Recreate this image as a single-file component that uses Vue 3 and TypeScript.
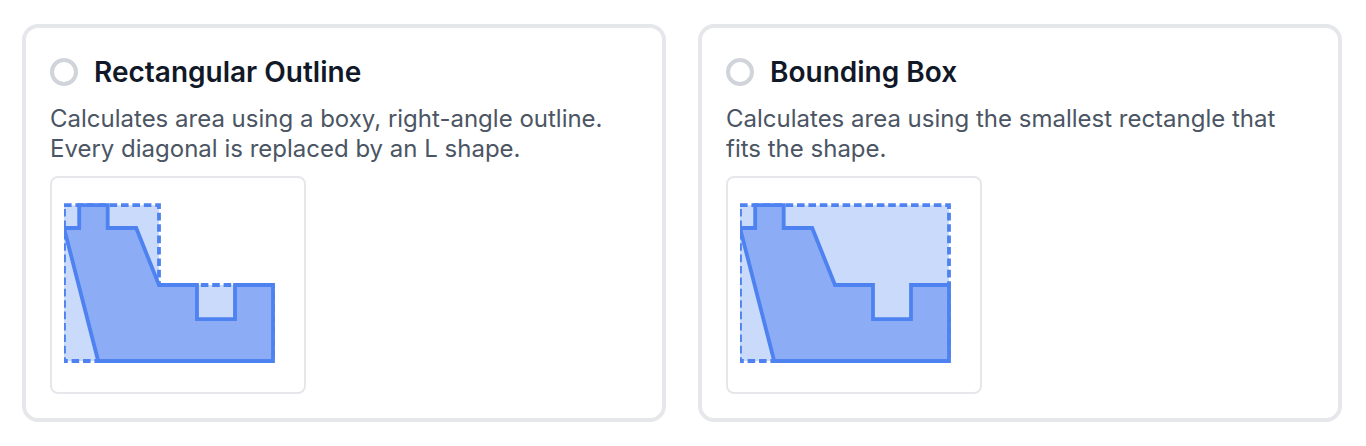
<script setup lang="ts">
import { ref } from 'vue'

interface Method {
  id: string
  title: string
  description: string
  envelope: string
}

const part =
  'M8 8H23V20H38L50 50H70V68H90V50H110V90H18L0 20H8Z'

const methods: Method[] = [
  {
    id: 'rectangular',
    title: 'Rectangular Outline',
    description:
      'Calculates area using a boxy, right-angle outline. Every diagonal is replaced by an L shape.',
    envelope: 'M0 8H50V50H110V90H0Z',
  },
  {
    id: 'bounding',
    title: 'Bounding Box',
    description:
      'Calculates area using the smallest rectangle that fits the shape.',
    envelope: 'M0 8H110V90H0Z',
  },
]

const selected = ref<string>('')
</script>

<template>
  <main class="methods" role="radiogroup" aria-label="Area calculation method">
    <label v-for="m in methods" :key="m.id" class="card" :for="m.id">
      <span class="heading">
        <input
          :id="m.id"
          v-model="selected"
          class="radio"
          type="radio"
          name="area-method"
          :value="m.id"
        />
        <span class="title">{{ m.title }}</span>
      </span>
      <span class="description">{{ m.description }}</span>
      <span class="preview">
        <svg class="diagram" viewBox="0 0 120 100" aria-hidden="true">
          <path class="envelope" :d="m.envelope" />
          <path class="part" :d="part" />
        </svg>
      </span>
    </label>
  </main>
</template>

<style>
body {
  background: #ffffff;
}
</style>

<style scoped>
.methods {
  display: grid;
  grid-template-columns: repeat(2, minmax(0, 1fr));
  gap: 32px;
  padding: 24px 24px 24px 22px;
  font-family: Inter, 'Liberation Sans', sans-serif;
}

.card {
  display: flex;
  flex-direction: column;
  align-items: flex-start;
  gap: 12px;
  padding: 24px;
  border: 4px solid #e5e7eb;
  border-radius: 16px;
  background: #ffffff;
  cursor: pointer;
}

.heading {
  display: flex;
  align-items: center;
  gap: 16px;
}

.radio {
  appearance: none;
  flex: none;
  box-sizing: border-box;
  width: 28px;
  height: 28px;
  margin: 0;
  border: 4px solid #d1d5db;
  border-radius: 50%;
  background: #ffffff;
  cursor: pointer;
}

.radio:checked {
  border: 8px solid #4d82f0;
}

.title {
  font-size: 28px;
  font-weight: 600;
  line-height: 40px;
  color: #111827;
}

.description {
  font-size: 24px;
  line-height: 30px;
  color: #4b5563;
}

.preview {
  box-sizing: border-box;
  width: 256px;
  max-width: 100%;
  padding: 12px;
  border: 2px solid #e5e7eb;
  border-radius: 8px;
}

.diagram {
  display: block;
  width: 100%;
}

.envelope,
.part {
  stroke: #4d82f0;
  stroke-width: 2;
}

.envelope {
  fill: #c9dafb;
  stroke-dasharray: 4 2;
}

.part {
  fill: #8cadf5;
}
</style>
